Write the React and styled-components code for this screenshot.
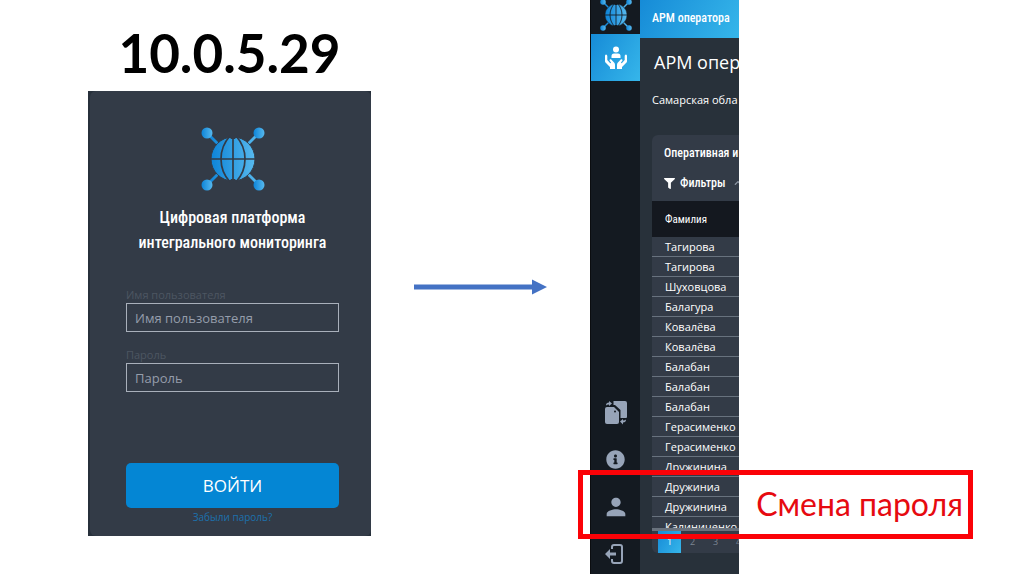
import { FaChevronUp, FaFilter, FaInfoCircle } from 'react-icons/fa';
import { MdPerson } from 'react-icons/md';
import styled, { createGlobalStyle } from 'styled-components';

const surnames = [
    'Тагирова', 'Тагирова', 'Шуховцова', 'Балагура', 'Ковалёва',
    'Ковалёва', 'Балабан', 'Балабан', 'Балабан', 'Герасименко',
    'Герасименко', 'Дружинина', 'Дружиниа', 'Дружинина', 'Калиниченко',
];

const narrow = "'Roboto Condensed', 'Liberation Sans', sans-serif";
const blueGradient = 'linear-gradient(120deg, #168bd7, #36b6ea)';

const GlobalStyle = createGlobalStyle`
    * {
        box-sizing: border-box;
    }

    body {
        margin: 0;
        background: white;
        font-family: 'Open Sans', 'Noto Sans', sans-serif;
    }
`

const Slide = styled.main`
    display: grid;
    grid-template-columns: 283fr 133fr 434fr;
    column-gap: 43px;
    min-height: 100vh;
    padding-left: 88px;
    overflow: hidden;
`

const LoginColumn = styled.section`
    padding-top: 15px;
`

const Address = styled.h1`
    margin: 0 0 1px;
    font: bold 53px/75px Lato, 'Open Sans', sans-serif;
    text-align: center;
    color: black;
`

const LoginFrame = styled.div`
    padding-left: 2px;
    background: #27303b;
`

const LoginCard = styled.form`
    display: flex;
    flex-direction: column;
    padding: 36px 32px 10px 36px;
    background: #333b47;
    border-radius: 6px;
`

const LoginLogo = styled.div`
    height: 64px;
    text-align: center;
`

const LoginTitle = styled.h2`
    margin: 14px 0 32px;
    font: 500 16px/25px ${narrow};
    text-align: center;
    color: white;
`

const Label = styled.label`
    font-size: 11px;
    line-height: 16px;
    color: #4d5662;
`

const Input = styled.input`
    width: 100%;
    height: 29px;
    margin-bottom: 15px;
    padding: 0 8px;
    background: transparent;
    border: 1px solid #a9b0bb;
    border-radius: 0;
    font: 13px/20px 'Open Sans', sans-serif;
    color: white;

    &::placeholder {
        color: #959dab;
        opacity: 1;
    }
`

const LoginButton = styled.button`
    height: 45px;
    margin-top: 56px;
    background: #0486d4;
    border: none;
    border-radius: 5px;
    font: 17px/24px 'Open Sans', sans-serif;
    color: white;
    cursor: pointer;
`

const ForgotLink = styled.a`
    align-self: center;
    font-size: 10px;
    line-height: 18px;
    color: #1c71ad;
    text-decoration: none;
`

const ArrowColumn = styled.div`
    padding-top: 279px;
`

const ArrowImage = styled.svg`
    display: block;
    width: 100%;
`

const Workplace = styled.section`
    position: relative;
`

const Preview = styled.div`
    display: flex;
    width: 149px;
    height: 100vh;
    overflow: hidden;
    background: #28313a;
    color: white;
`

const Sidebar = styled.nav`
    display: flex;
    flex-direction: column;
    flex: 0 0 50px;
    background: #141a21;
    border-left: 1px solid #0b0d10;
`

const SidebarLogo = styled.div`
    display: flex;
    flex: none;
    justify-content: center;
    align-items: flex-end;
    height: 34px;
    padding-bottom: 3px;
`

const SidebarButton = styled.button`
    display: flex;
    flex: none;
    justify-content: center;
    align-items: center;
    width: 100%;
    height: 47px;
    padding: 0;
    background: ${props => props.$active ? blueGradient : 'none'};
    border: none;
    color: ${props => props.$active ? 'white' : '#97a4b8'};
    cursor: pointer;
`

const SidebarBottom = styled.div`
    margin-top: 308px;
`

const Content = styled.div`
    flex: 1;
    min-width: 0;
    white-space: nowrap;
`

const Header = styled.header`
    height: 38px;
    padding-left: 12px;
    background: ${blueGradient};
    font: 500 12px/36px ${narrow};
`

const PageTitle = styled.h2`
    margin: 10px 0 0 14px;
    font-size: 18px;
    font-weight: normal;
    line-height: 28px;
`

const Region = styled.p`
    margin: 16px 0 27px 12px;
    font-size: 11px;
    line-height: 16px;
`

const Panel = styled.div`
    margin-left: 12px;
    background: #333b47;
    border-radius: 6px 0 0 6px;
`

const PanelTitle = styled.h3`
    margin: 0;
    padding: 4px 0 0 12px;
    font: 500 12px/28px ${narrow};
`

const Filters = styled.button`
    display: flex;
    align-items: center;
    gap: 5px;
    height: 34px;
    padding: 0 0 2px 12px;
    background: none;
    border: none;
    font: 500 12px/20px ${narrow};
    color: white;

    svg:last-child {
        margin-left: 4px;
        color: #8b94a1;
    }
`

const TableScroll = styled.div`
    height: 330px;
    overflow: hidden;
    border-bottom: 3px solid #69727d;
`

const Table = styled.table`
    width: 100%;
    border-collapse: separate;
    border-spacing: 0;

    th {
        height: 36px;
        padding: 2px 0 0 13px;
        background: #14181f;
        font: 11px/20px ${narrow};
        text-align: left;
    }

    td {
        height: 20px;
        padding: 0 0 0 13px;
        border-bottom: 1px solid #68727e;
        font-size: 11px;
        font-weight: 500;
        line-height: 19px;
    }
`

const Pagination = styled.div`
    display: flex;
    padding-left: 6px;
`

const PageButton = styled.button`
    flex: 0 0 23px;
    height: 22px;
    padding: 0;
    background: ${props => props.$current ? blueGradient : 'none'};
    border: none;
    font: 9px/16px 'Open Sans', sans-serif;
    color: ${props => props.$current ? 'white' : '#7c8592'};
`

// frame drawn over the preview, around the profile button
const Callout = styled.div`
    position: absolute;
    top: 470px;
    left: -12px;
    width: 395px;
    height: 69px;
    padding-right: 5px;
    border: 5px solid #fb0207;
    font: 32px/58px Lato, 'Open Sans', sans-serif;
    text-align: right;
    color: #e60a10;
`

function Logo({ size, id, gap }) {
    return (
        <svg width={size} height={size} viewBox="0 0 64 64" aria-hidden="true">
            <defs>
                <linearGradient id={id}>
                    <stop offset="0" stopColor="#0d84d8" />
                    <stop offset="1" stopColor="#57b9ee" />
                </linearGradient>
            </defs>
            <g fill={`url(#${id})`}>
                <path d="M5 7 L7 5 L59 57 L57 59 Z" />
                <path d="M57 5 L59 7 L7 59 L5 57 Z" />
                <circle cx="6" cy="6" r="5.5" />
                <circle cx="58" cy="6" r="5.5" />
                <circle cx="6" cy="58" r="5.5" />
                <circle cx="58" cy="58" r="5.5" />
                <circle cx="32" cy="32" r="22" stroke={gap} strokeWidth="1" />
            </g>
            <g fill="none" stroke={gap} strokeWidth="1.7">
                <path d="M32 9 V55 M9 32 H55" />
                <path d="M29 9 C17 22 17 42 29 55 M35 9 C47 22 47 42 35 55" />
            </g>
            <path d="M28 9 H36 L34 12 H30 Z M28 55 H36 L34 52 H30 Z" fill={gap} />
        </svg>
    );
}

function HandsIcon() {
    return (
        <svg width="24" height="24" viewBox="0 0 24 24" fill="currentColor" aria-hidden="true">
            <circle cx="12" cy="3.500" r="3" />
            <path d="M7.500 12 V10 Q7.500 7.500 10 7.500 H14 Q16.500 7.500 16.500 10 V12 Z" />
            <path d="M1 10 Q1 8.500 2 8.500 Q3.300 8.500 3.300 10 V14 L6 17 Q7 17.500 7 16.500 L5.500 14.500 Q5.500 13 7 13.300 L10.500 17 Q11 18 11 19 V23 H6 V21 L1.500 16.500 Q1 16 1 15 Z" />
            <path d="M23 10 Q23 8.500 22 8.500 Q20.700 8.500 20.700 10 V14 L18 17 Q17 17.500 17 16.500 L18.500 14.500 Q18.500 13 17 13.300 L13.500 17 Q13 18 13 19 V23 H18 V21 L22.500 16.500 Q23 16 23 15 Z" />
        </svg>
    );
}

function FilesIcon() {
    return (
        <svg width="24" height="26" viewBox="0 0 24 26" fill="currentColor" aria-hidden="true">
            <path d="M9.500 1 H21 Q23 1 23 3 V17 Q23 18 22 18 H16.500 V10 L11 5 H9.500 Z" />
            <path d="M1 9 Q1 7 3 7 H10 L15 12 V22 Q15 24 13 24 H3 Q1 24 1 22 Z" />
            <path d="M2 5.500 Q2 2.500 5 2.500 V1 L8 3.500 L5 6 V4.500 Q3 4.500 2 5.500 Z" />
            <path d="M22 19.500 Q22 22.500 19 22.500 V24.500 L16 21.500 L19 19 V20.500 Q21 20.500 22 19.500 Z" />
            <circle cx="11" cy="11.500" r="1" fill="#141a21" />
        </svg>
    );
}

function ExitIcon() {
    return (
        <svg width="24" height="22" viewBox="0 0 24 22" aria-hidden="true">
            <path d="M8 6 V4 Q8 2 10 2 H16 Q18 2 18 4 V18 Q18 20 16 20 H10 Q8 20 8 18 V16" fill="none" stroke="currentColor" strokeWidth="2" />
            <path d="M1 11 L6 6 V9.500 H12 V12.500 H6 V16 Z" fill="currentColor" />
        </svg>
    );
}

function App() {
    return (
        <>
            <GlobalStyle />
            <Slide>
                <LoginColumn>
                    <Address>10.0.5.29</Address>
                    <LoginFrame>
                        <LoginCard onSubmit={e => e.preventDefault()}>
                            <LoginLogo><Logo id="loginLogo" size={64} gap="#333b47" /></LoginLogo>
                            <LoginTitle>Цифровая платформа<br />интегрального мониторинга</LoginTitle>
                            <Label htmlFor="user">Имя пользователя</Label>
                            <Input id="user" placeholder="Имя пользователя" />
                            <Label htmlFor="password">Пароль</Label>
                            <Input id="password" type="password" placeholder="Пароль" />
                            <LoginButton>ВОЙТИ</LoginButton>
                            <ForgotLink href="#">Забыли пароль?</ForgotLink>
                        </LoginCard>
                    </LoginFrame>
                </LoginColumn>
                <ArrowColumn>
                    <ArrowImage viewBox="0 0 133 16" aria-hidden="true">
                        <path d="M0 5.500 H118 V0.500 L133 8 L118 15.500 V10.500 H0 Z" fill="#4472c4" />
                    </ArrowImage>
                </ArrowColumn>
                <Workplace>
                    <Preview>
                        <Sidebar>
                            <SidebarLogo><Logo id="sideLogo" size={32} gap="#141a21" /></SidebarLogo>
                            <SidebarButton $active aria-label="АРМ оператора"><HandsIcon /></SidebarButton>
                            <SidebarBottom>
                                <SidebarButton aria-label="Документы"><FilesIcon /></SidebarButton>
                                <SidebarButton aria-label="Информация"><FaInfoCircle size={19} /></SidebarButton>
                                <SidebarButton aria-label="Профиль"><MdPerson size={28} /></SidebarButton>
                                <SidebarButton aria-label="Выход"><ExitIcon /></SidebarButton>
                            </SidebarBottom>
                        </Sidebar>
                        <Content>
                            <Header>АРМ оператора</Header>
                            <PageTitle>АРМ опер</PageTitle>
                            <Region>Самарская обла</Region>
                            <Panel>
                                <PanelTitle>Оперативная и</PanelTitle>
                                <Filters><FaFilter size={11} /> Фильтры <FaChevronUp size={8} /></Filters>
                                <TableScroll>
                                    <Table>
                                        <thead>
                                            <tr><th>Фамилия</th></tr>
                                        </thead>
                                        <tbody>
                                            {surnames.map((name, i) => (
                                                <tr key={i}><td>{name}</td></tr>
                                            ))}
                                        </tbody>
                                    </Table>
                                </TableScroll>
                                <Pagination>
                                    {[1, 2, 3, 4].map(n => (
                                        <PageButton key={n} $current={n === 1}>{n}</PageButton>
                                    ))}
                                </Pagination>
                            </Panel>
                        </Content>
                    </Preview>
                    <Callout>Смена пароля</Callout>
                </Workplace>
            </Slide>
        </>
    );
}

export default App;
